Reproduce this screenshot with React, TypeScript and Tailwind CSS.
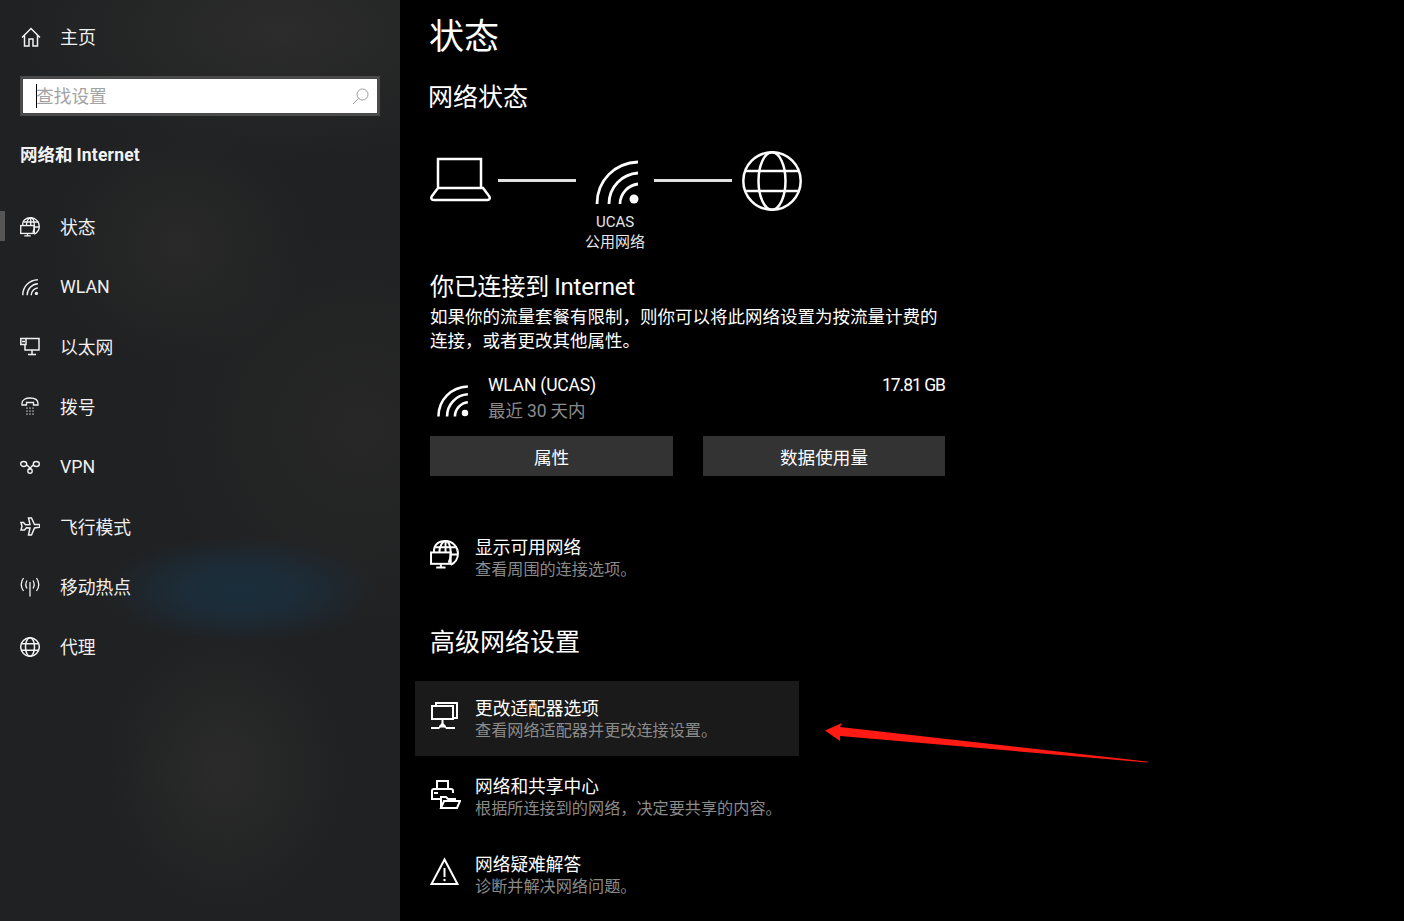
import React from "react";

const S = ({ size = 20, w = 1.2, vb = 20, children }: { size?: number; w?: number; vb?: number; children: React.ReactNode }) => (
  <svg width={size} height={size} viewBox={`0 0 ${vb} ${vb}`} fill="none" stroke="currentColor" strokeWidth={w} className="shrink-0 block">
    {children}
  </svg>
);

const L = ({ children }: { children: React.ReactNode }) => <span className="font-['Roboto',sans-serif]">{children}</span>;

const Wifi = ({ size, w }: { size: number; w: number }) => (
  <S size={size} w={w} vb={46}>
    <path d="M2 44C2 20 20 3 43 2" />
    <path d="M14 44C14 27 27 14 43 13" />
    <path d="M25 44C25 34 33 25 43 24" />
    <circle cx="39" cy="39" r="4.500" fill="currentColor" stroke="none" />
  </S>
);

const GlobeScreen = ({ size, w }: { size: number; w: number }) => (
  <S size={size} w={w} vb={28}>
    <path d="M4 12C3 5 8 1 15 1c7 0 12 6 12 12 0 5-3 9-7 11" />
    <path d="M9 12c0-6 3-11 6-11s5 5 5 11c0 4-1 8-2 10" />
    <path d="M5 7h21M20 14h7" />
    <path d="M15 1v11" />
    <rect x="1" y="12" width="19" height="11" />
    <path d="M10.500 23v3M6 26.500h9" />
  </S>
);

const icons: Record<string, React.ReactNode> = {
  status: <GlobeScreen size={20} w={1.900} />,
  wlan: <span className="block w-[17px] h-[17px] ml-[2px]"><Wifi size={17} w={3.800} /></span>,
  ethernet: (
    <S w={1.500}>
      <path d="M6 1.500h13v11.500H5V8" />
      <rect x="0.800" y="1.500" width="5.200" height="6" />
      <path d="M2 4.500h3" />
      <path d="M12 13v4M8 17.500h8" />
    </S>
  ),
  dial: (
    <S w={1.300}>
      <path d="M2 6.500C2 2.500 6 1 10 1s8 1.500 8 5.500V8h-4.500V5.500h-7V8H2z" />
      <g fill="currentColor" stroke="none">
        {[7, 10, 13].flatMap((x) => [10.500, 13.500, 16.500].map((y) => <rect key={`${x}-${y}`} x={x - 0.600} y={y} width="1.200" height="1.200" />))}
      </g>
    </S>
  ),
  vpn: (
    <S w={1.400}>
      <ellipse cx="3.700" cy="7" rx="3" ry="2.500" />
      <ellipse cx="16.300" cy="7" rx="3" ry="2.500" />
      <path d="M6.500 8c2 .5 3 2.500 4.500 4.500M13.600 8c-1.500.5-3 2.500-4.500 4.500" />
      <circle cx="10" cy="14" r="2.200" />
    </S>
  ),
  plane: (
    <S w={1.500}>
      <path d="M8.500 1h3l3 6.500h4.800c.5 0 .7 2.500 0 2.800l-4.800.7-3 7h-3l1.500-7-3.500-.3-2 2.300H1l1-3.800-1-3.700h2.500l2 2.200 4.500-.2z" />
    </S>
  ),
  hotspot: (
    <S w={1.300}>
      <path d="M3.500 1C.700 5 .700 10 3.500 14M16.500 1c2.800 4 2.800 9 0 13" />
      <path d="M7 3.500C5.500 6 5.500 9 7 11.500M13 3.500c1.500 2.500 1.500 5.500 0 8" />
      <path d="M10 5v14.500" />
    </S>
  ),
  proxy: (
    <S w={1.500}>
      <circle cx="10" cy="10" r="9.300" />
      <ellipse cx="10" cy="10" rx="4.500" ry="9.300" />
      <path d="M1.500 6.700h17M1.500 13.300h17" />
    </S>
  ),
};

const nav: [string, React.ReactNode][] = [
  ["status", "状态"],
  ["wlan", <L>WLAN</L>],
  ["ethernet", "以太网"],
  ["dial", "拨号"],
  ["vpn", <L>VPN</L>],
  ["plane", "飞行模式"],
  ["hotspot", "移动热点"],
  ["proxy", "代理"],
];

const Row = ({ icon, title, sub, active }: { icon: React.ReactNode; title: string; sub: string; active?: boolean }) => (
  <div className={`-ml-[15px] w-[384px] h-[75px] pl-[15px] pt-[16px] flex ${active ? "bg-[#1a1a1a]" : ""}`}>
    <div className="w-[45px] pt-[4px] shrink-0 text-white">{icon}</div>
    <div className="whitespace-nowrap">
      <div className="h-[22px] leading-[20px] text-[17.700px] text-white">{title}</div>
      <div className="h-[22px] leading-[20px] text-[16.150px] text-[#8a8a8a]">{sub}</div>
    </div>
  </div>
);

export default function App() {
  return (
    <div className="relative flex w-[1404px] h-[921px] overflow-hidden bg-black text-white font-['Noto_Sans_CJK_SC','Roboto',sans-serif]">
      <aside className="w-[400px] shrink-0 h-full bg-[#202122] bg-[radial-gradient(ellipse_140px_55px_at_240px_590px,#1a2e3b_0%,#1c2c38_40%,transparent_100%),radial-gradient(ellipse_120px_140px_at_225px_770px,#2b2b2b_0%,transparent_100%),radial-gradient(ellipse_130px_120px_at_180px_245px,#292929_0%,transparent_100%),radial-gradient(ellipse_260px_130px_at_280px_30px,#2c2c2c_0%,transparent_100%),radial-gradient(ellipse_200px_200px_at_360px_430px,#272727_0%,transparent_100%)]">
        <div className="h-[40px] mt-[17px] pl-[21px] flex items-center text-[#f2f2f2]">
          <S w={1.500}>
            <path d="M1 10.500 10 1.500l9 9M3.500 8.500V19h4.500v-7h4v7h4.500V8.500" />
          </S>
          <span className="ml-[19px] pb-[2px] text-[18px]">主页</span>
        </div>
        <div className="mt-[19px] ml-[20px] w-[360px] h-[40px] border-[3px] border-[#4a4a4a] bg-white flex items-center pl-[13px] pr-[8px]">
          <div className="w-px h-[24px] bg-black shrink-0" />
          <span className="-ml-px pb-[2px] text-[17.700px] text-[#a3a3a3] flex-1">查找设置</span>
          <svg width="17" height="17" viewBox="0 0 17 17" fill="none" stroke="#9a9a9a" strokeWidth="1" className="block">
            <circle cx="10.500" cy="6.500" r="5.500" />
            <path d="M6.500 10.500 1 16" />
          </svg>
        </div>
        <div className="mt-[23px] ml-[20px] h-[30px] leading-[30px] text-[17.500px] font-bold text-[#f2f2f2]">网络和 <span className="font-['Roboto',sans-serif] tracking-[0.200px]">Internet</span></div>
        <div className="mt-[28px] flex flex-col">
          {nav.map(([k, t], i) => (
            <div key={k} className="relative h-[60px] pl-[20px] flex items-center text-[#f0f0f0]">
              {i === 0 && <div className="absolute left-0 top-[14px] w-[5px] h-[30px] bg-[#555555]" />}
              <div className="w-[40px] shrink-0">{icons[k]}</div>
              <span className="pb-[2px] text-[17.800px]">{t}</span>
            </div>
          ))}
        </div>
      </aside>

      <main className="flex-1 pl-[30px]">
        <div className="h-[72px] leading-[68px] text-[35px] -ml-px">状态</div>
        <div className="mt-[8px] -ml-[2px] h-[32px] leading-[30px] text-[25px]">网络状态</div>

        <div className="mt-[38px] h-[102px] flex items-start">
          <div className="w-[62px] h-[62px] pt-[7px]">
            <svg width="62" height="46" viewBox="0 0 62 46" fill="none" stroke="#fff" strokeWidth="2.500" className="block">
              <path d="M8 30V2h43v28" />
              <path d="M8 31 2 39c-1.500 2-.5 4 1.500 4h54c2 0 3-2 1.500-4l-6-8z" />
            </svg>
          </div>
          <div className="ml-[6px] mt-[29px] w-[78px] h-[3px] bg-[#e0e0e0]" />
          <div className="w-[78px] flex flex-col items-center">
            <div className="h-[61px] pt-[10px] pl-[5px]"><Wifi size={46} w={2.800} /></div>
            <div className="h-[20px] leading-[20px] text-[15px] text-[#e6e6e6] whitespace-nowrap"><L>UCAS</L></div>
            <div className="h-[20px] leading-[20px] text-[15px] text-[#e6e6e6] whitespace-nowrap">公用网络</div>
          </div>
          <div className="mt-[29px] w-[78px] h-[3px] bg-[#e0e0e0]" />
          <div className="ml-[10px] w-[60px]">
            <svg width="60" height="60" viewBox="0 0 60 60" fill="none" stroke="#fff" strokeWidth="2.500" className="block mt-px">
              <circle cx="30" cy="30" r="28.700" />
              <ellipse cx="30" cy="30" rx="13.500" ry="28.700" />
              <path d="M4 20h52M4 40h52" />
            </svg>
          </div>
        </div>

        <div className="mt-[18px] h-[32px] leading-[30px] text-[24px] tracking-[-0.200px]">你已连接到 <L>Internet</L></div>
        <div className="mt-[2px] w-[515px] leading-[24px] text-[17.500px] text-white">
          如果你的流量套餐有限制，则你可以将此网络设置为按流量计费的连接，或者更改其他属性。
        </div>

        <div className="mt-[20px] w-[515px] h-[52px] flex">
          <div className="w-[58px] pl-[7px] pt-[13px]"><Wifi size={33} w={3.600} /></div>
          <div className="flex-1 whitespace-nowrap">
            <div className="h-[26px] leading-[24px] text-[17.500px] tracking-[-0.200px]"><L>WLAN (UCAS)</L></div>
            <div className="h-[26px] leading-[24px] text-[17.500px] text-[#8a8a8a]">最近 <L>30</L>  天内</div>
          </div>
          <div className="h-[26px] leading-[24px] text-[17.500px] tracking-[-1px]"><L>17.81 GB</L></div>
        </div>

        <div className="mt-[12px] w-[515px] flex justify-between">
          <div className="w-[243px] h-[40px] pt-[3px] bg-[#333333] flex items-center justify-center text-[17.600px]">属性</div>
          <div className="w-[242px] h-[40px] pt-[3px] bg-[#333333] flex items-center justify-center text-[17.600px]">数据使用量</div>
        </div>

        <div className="mt-[44px]">
          <Row icon={<GlobeScreen size={29} w={1.900} />} title="显示可用网络" sub="查看周围的连接选项。" />
        </div>

        <div className="mt-[30px] h-[32px] leading-[30px] text-[25px]">高级网络设置</div>

        <div className="mt-[24px] flex flex-col gap-[3px]">
          <Row
            active
            icon={
              <S size={29} w={2} vb={29}>
                <path d="M6 5V2h21v15h-4" />
                <rect x="2" y="5" width="21" height="13" />
                <path d="M12.500 18v4M1 27h8M16 27h9M9 27l3.500-4.500L16 27M9 25.500h7" />
              </S>
            }
            title="更改适配器选项"
            sub="查看网络适配器并更改连接设置。"
          />
          <Row
            icon={
              <S size={31} w={2} vb={31}>
                <path d="M7 10V2h11v8" />
                <path d="M11 20H2v-8c0-1 1-2 2-2h17c1 0 2 1 2 2v2" />
                <path d="M4 14h4" />
                <path d="M11 29V18h5l2 2h7v3" />
                <path d="M11 29h16l3-7H14z" />
              </S>
            }
            title="网络和共享中心"
            sub="根据所连接到的网络，决定要共享的内容。"
          />
          <Row
            icon={
              <S size={29} w={2} vb={29}>
                <path d="M14.500 2.500 1.500 27h26z" />
                <path d="M14.500 11v9" />
                <circle cx="14.500" cy="23" r="1.200" fill="currentColor" stroke="none" />
              </S>
            }
            title="网络疑难解答"
            sub="诊断并解决网络问题。"
          />
          <Row icon={null} title="查看网络属性" sub="" />
        </div>
      </main>

      <svg width="330" height="45" viewBox="0 0 330 45" className="absolute left-[820px] top-[720px] block">
        <path d="M5 10.500 22 3 20 7 327 41.500V42.500L20 16 20 21z" fill="#ff1a14" />
      </svg>
    </div>
  );
}
